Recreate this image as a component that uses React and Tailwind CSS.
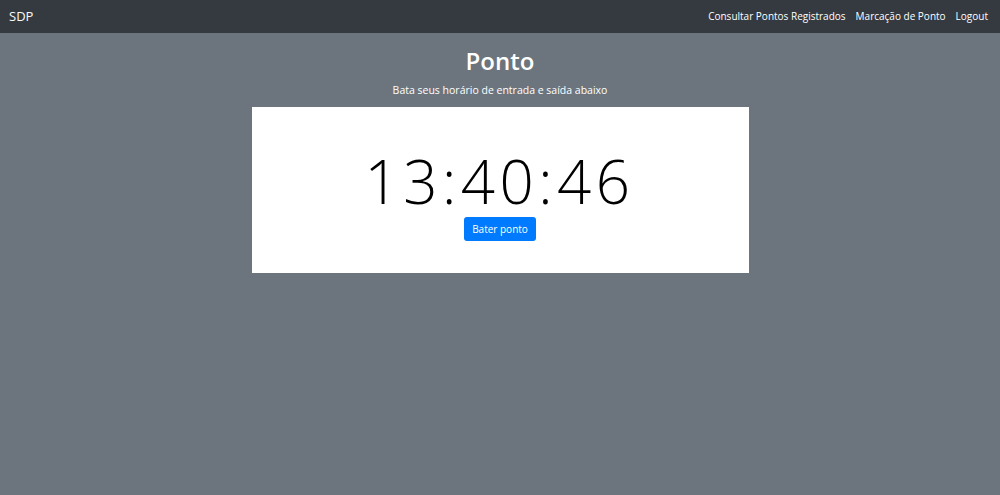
export default function App() {
  return (
    <div className="min-h-[495px] bg-[#6c757d]" style={{ fontFamily: '"Open Sans", "Noto Sans", sans-serif' }}>
      <nav className="h-[33px] bg-[#343a40] flex items-center justify-between px-[9px]">
        <span className="text-[#f8f9fa] text-[13px]">SDP</span>
        <div className="flex items-center gap-[10px] text-[10px] text-white pr-[3px]">
          <span>Consultar Pontos Registrados</span>
          <span>Marcação de Ponto</span>
          <span>Logout</span>
        </div>
      </nav>
      <div className="flex flex-col items-center">
        <h1 className="mt-[11px] text-[24px] font-semibold text-white leading-[34px]">Ponto</h1>
        <p className="mt-[4px] text-[10.5px] text-white leading-[16px]">Bata seus horário de entrada e saída abaixo</p>
        <div className="mt-[9px] w-[497px] h-[166px] bg-white flex flex-col items-center">
          <div className="mt-[40px] text-[60px] font-light text-black leading-[68px] tracking-[4.5px] pl-[3px] mr-[4px]">13:40:46</div>
          <button className="mt-[2px] h-[24px] px-[8px] bg-[#007bff] text-white text-[10px] rounded-[3px]">Bater ponto</button>
        </div>
      </div>
    </div>
  );
}
